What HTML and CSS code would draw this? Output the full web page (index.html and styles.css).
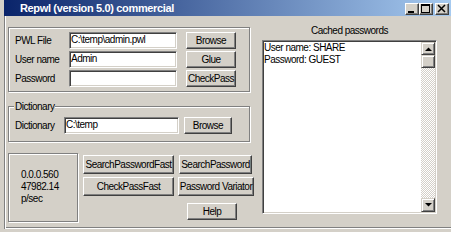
FILE: index.html
```html
<!DOCTYPE html>
<html>
<head>
<meta charset="utf-8">
<link rel="stylesheet" href="styles.css">
</head>
<body>
<div class="window">
  <div class="titlebar">
    <span class="title">Repwl (version 5.0) commercial</span>
    <div class="caption-buttons">
      <div class="cap-btn"><svg width="12" height="10" viewBox="0 0 12 10"><rect x="2" y="7" width="6" height="2" fill="#000"/></svg></div>
      <div class="cap-btn"><svg width="12" height="10" viewBox="0 0 12 10"><rect x="1.5" y="0.5" width="8" height="8" fill="none" stroke="#000"/><rect x="1" y="0" width="9" height="2" fill="#000"/></svg></div>
      <div class="cap-btn close"><svg width="12" height="10" viewBox="0 0 12 10"><path d="M2 1l7 7M9 1l-7 7" stroke="#000" stroke-width="1.5" fill="none"/></svg></div>
    </div>
  </div>
  <div class="client">
    <div class="left-pane">
      <div class="group group-file">
        <div class="row"><span class="label">PWL File</span><div class="edit">C:\temp\admin.pwl</div><div class="btn">Browse</div></div>
        <div class="row"><span class="label">User name</span><div class="edit">Admin</div><div class="btn">Glue</div></div>
        <div class="row"><span class="label">Password</span><div class="edit"></div><div class="btn">CheckPass</div></div>
      </div>
      <div class="group group-dict">
        <span class="legend">Dictionary</span>
        <div class="row"><span class="label">Dictionary</span><div class="edit">C:\temp</div><div class="btn">Browse</div></div>
      </div>
      <div class="bottom">
        <div class="stats">0.0.0.560<br>47982.14<br>p/sec</div>
        <div class="actions">
          <div class="action-row"><div class="btn spf">SearchPasswordFast</div><div class="btn sp">SearchPassword</div></div>
          <div class="action-row r2"><div class="btn cpf">CheckPassFast</div><div class="btn pv">Password Variator</div></div>
          <div class="btn help">Help</div>
        </div>
      </div>
    </div>
    <div class="right-pane">
      <div class="caption">Cached passwords</div>
      <div class="memo">
        <div class="memo-text">User name: SHARE
Password: GUEST</div>
        <div class="scrollbar">
          <div class="sb-btn"><svg width="7" height="4" viewBox="0 0 7 4"><polygon points="0,4 7,4 3.5,0.5" fill="#000"/></svg></div>
          <div class="sb-btn"></div>
          <div class="sb-track"></div>
          <div class="sb-btn down"><svg width="7" height="4" viewBox="0 0 7 4"><polygon points="0,0 7,0 3.5,3.5" fill="#000"/></svg></div>
        </div>
      </div>
    </div>
  </div>
</div>
</body>
</html>
```
FILE: styles.css
```css
body { margin: 0; background: #d4d0c8; }
.window {
  width: 451px; height: 232px; background: #d4d0c8; overflow: hidden;
  font-family: "Liberation Sans", Arial, sans-serif;
  font-size: 10px; line-height: 13px; letter-spacing: -0.5px; color: #000;
}
.titlebar {
  margin-left: 4px; height: 16px; display: flex; align-items: center;
  background: linear-gradient(to right, #0a246a, #a6caf0); color: #fff;
}
.title {
  font-family: "Liberation Sans", Arial, sans-serif; font-weight: bold;
  font-size: 11px; line-height: 13px; letter-spacing: -0.35px; margin-left: 16px;
}
.caption-buttons { margin-left: auto; margin-right: 2px; margin-top: 2px; display: flex; }
.cap-btn {
  width: 14px; height: 12px; box-sizing: border-box; background: #d4d0c8;
  border: 1px solid; border-color: #fff #404040 #404040 #fff;
  box-shadow: inset -1px -1px #808080; display: flex;
}
.cap-btn svg { display: block; }
.cap-btn.close { margin-left: 2px; }
.client {
  margin-left: 4px; height: 213px; display: flex;
  box-shadow: inset 1px 0 #808080, inset 0 -1px #fff, inset 2px 0 #fff, inset 0 -2px #808080;
}
.left-pane { width: 252px; flex: none; box-sizing: border-box; padding: 11px 0 0 4px; }
.group {
  position: relative; box-sizing: border-box; width: 242px;
  border: 1px solid #808080; box-shadow: inset 1px 1px #fff, 1px 1px #fff;
}
.group-file { height: 65px; padding: 4px 0 0 6px; display: flex; flex-direction: column; gap: 2px; }
.group-dict { height: 36px; margin-top: 14px; padding: 10px 0 0 6px; }
.legend {
  position: absolute; top: -7px; left: 5px; padding: 0 1px; background: #d4d0c8; line-height: 13px;
}
.row { display: flex; align-items: center; height: 17px; }
.label { width: 54px; flex: none; white-space: nowrap; margin-top: -1px; }
.group-dict .label { width: 49px; }
.edit {
  width: 108px; height: 17px; flex: none; box-sizing: border-box; background: #fff;
  border: 1px solid; border-color: #808080 #fff #fff #808080;
  box-shadow: inset 1px 1px #404040, inset -1px -1px #d4d0c8;
  padding: 0 0 0 1px; line-height: 13px; white-space: nowrap; overflow: hidden;
}
.group-dict .edit { width: 115px; }
.btn {
  box-sizing: border-box; flex: none; background: #d4d0c8;
  border: 1px solid; border-color: #fff #404040 #404040 #fff;
  box-shadow: inset -1px -1px #808080;
  display: flex; align-items: center; justify-content: center;
  white-space: nowrap; overflow: hidden;
}
.row .btn { width: 50px; height: 17px; margin-left: 9px; }
.group-dict .row .btn { width: 48px; margin-left: 5px; }
.bottom { display: flex; margin-top: 11px; }
.stats {
  width: 70px; height: 69px; flex: none; box-sizing: border-box;
  border: 1px solid #808080; box-shadow: 1px 1px #fff, inset 1px 1px #fff;
  padding: 15px 0 0 12px; line-height: 12px;
}
.actions { margin: 2px 0 0 5px; display: flex; flex-direction: column; }
.action-row { display: flex; }
.action-row .btn { height: 19px; }
.spf { width: 91px; }
.sp { width: 73px; margin-left: 5px; }
.r2 { margin-top: 3px; }
.cpf { width: 91px; }
.pv { width: 76px; margin-left: 4px; }
.help { width: 50px; height: 17px; margin: 7px 0 0 104px; }
.right-pane { padding: 8px 0 0 6px; }
.caption { width: 175px; text-align: center; line-height: 13px; }
.memo {
  width: 175px; height: 174px; margin-top: 3px; box-sizing: border-box; background: #fff;
  border: 1px solid; border-color: #808080 #fff #fff #808080;
  box-shadow: inset 1px 1px #404040, inset -1px -1px #d4d0c8;
  padding: 1px; display: flex;
}
.memo-text { flex: 1; line-height: 12px; white-space: pre; background: #fff; }
.scrollbar { width: 14px; display: flex; flex-direction: column; }
.sb-btn {
  height: 13px; box-sizing: border-box; background: #d4d0c8; flex: none;
  border: 1px solid; border-color: #d4d0c8 #404040 #404040 #d4d0c8;
  box-shadow: inset 1px 1px #fff, inset -1px -1px #808080;
  display: flex; align-items: center; justify-content: center;
}
.sb-btn svg { display: block; }
.sb-btn.down { height: 14px; }
.sb-track {
  flex: 1;
  background: repeating-conic-gradient(#fff 0 25%, #d4d0c8 0 50%) 0 0 / 2px 2px;
}
```
